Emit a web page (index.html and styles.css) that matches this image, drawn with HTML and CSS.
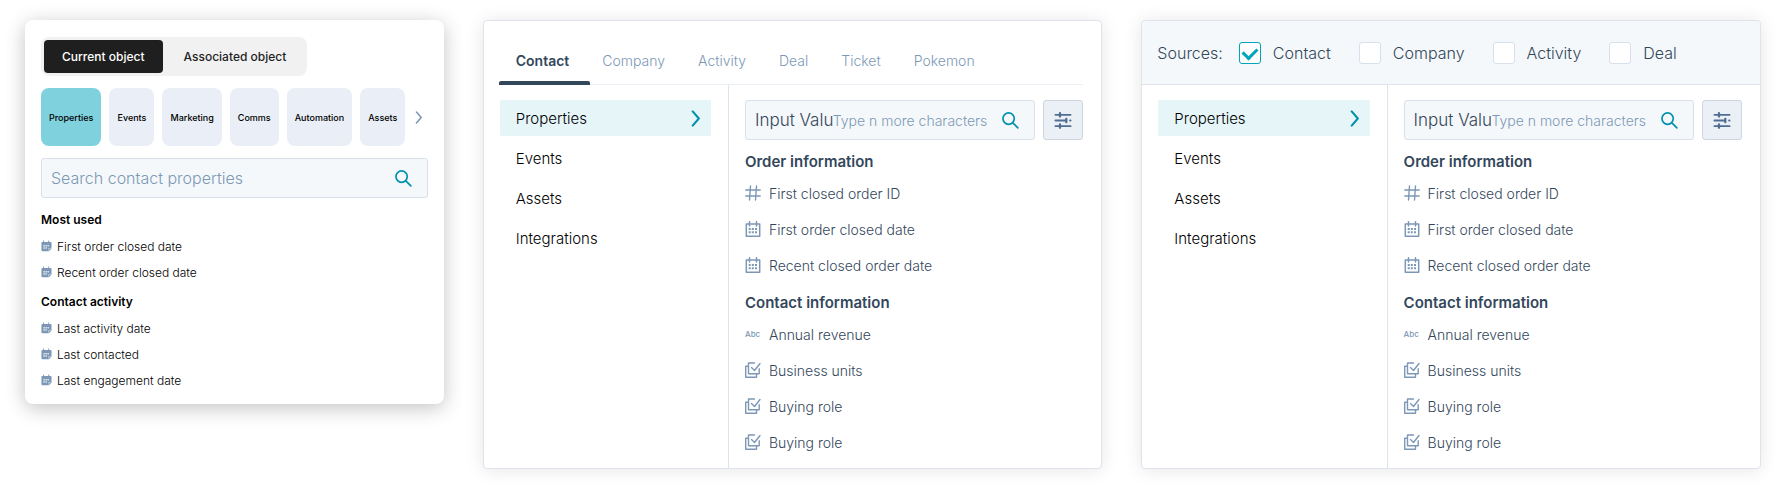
FILE: index.html
```html
<!DOCTYPE html>
<html lang="en">
<head>
  <meta charset="UTF-8" />
  <meta name="viewport" content="width=device-width, initial-scale=1.0"/>
  <title>Property picker</title>
  <link rel="stylesheet" href="styles.css">
</head>
<body>
  <svg class="sprite" aria-hidden="true">
    <symbol id="icon-search" viewBox="0 0 18 18">
      <circle cx="7" cy="7" r="6" fill="none" stroke="currentColor" stroke-width="1.8"/>
      <path d="M11.500 11.500l5.300 5.300" fill="none" stroke="currentColor" stroke-width="1.8" stroke-linecap="round"/>
    </symbol>
    <symbol id="icon-chevron" viewBox="0 0 10 18">
      <path d="M1.5 1.5l6.5 7.5l-6.5 7.5" fill="none" stroke="currentColor" stroke-width="2.2" stroke-linecap="round" stroke-linejoin="round"/>
    </symbol>
    <symbol id="icon-filter" viewBox="0 0 18 18">
      <path d="M1 3h5M6 3h11M1 9h11M16.500 9h0.500M1 15h5M6 15h11" fill="none" stroke="currentColor" stroke-width="2" stroke-linecap="round"/>
      <path d="M5.800 1.200v3.600M12.500 7.200v3.600M5.800 13.200v3.600" fill="none" stroke="currentColor" stroke-width="2.400" stroke-linecap="round"/>
    </symbol>
    <symbol id="icon-hash" viewBox="0 0 16 16">
      <path d="M5.500 1l-1 14M11.500 1l-1 14M0.800 5h14.400M0.800 11h14.400" fill="none" stroke="currentColor" stroke-width="1.400" stroke-linecap="round"/>
    </symbol>
    <symbol id="icon-calendar" viewBox="0 0 16 16">
      <path d="M1.300 3h13.400v12.200h-13.400zM4.500 0.700v4.300M11.500 0.700v4.300" fill="none" stroke="currentColor" stroke-width="1.500" stroke-linecap="round" stroke-linejoin="round"/>
      <path d="M6.800 7h2v2h-2zM10 7h2v2h-2zM3.700 10.300h2v2h-2zM6.800 10.300h2v2h-2zM10 10.300h2v2h-2zM3.700 7h2v2h-2z" fill="currentColor"/>
    </symbol>
    <symbol id="icon-calendar-solid" viewBox="0 0 12 12">
      <path d="M0.500 2.500q0-1 1-1h0.800v-1.500h1v1.500h4.600v-1.500h1v1.500h1.600q1 0 1 1v6.300l-2.800 2.900h-7.200q-1 0-1-1z" fill="currentColor"/>
      <path d="M2.800 5h1.200v1.500h-1.200zM5 5h1.200v1.500h-1.200zM7.200 5h1.200v1.500h-1.200zM2.800 7.400h1.200v1.500h-1.200zM5 7.400h1.200v1.500h-1.200z" fill="#fff"/>
      <path d="M10.800 8.600h-2.400v2.600" fill="none" stroke="#fff" stroke-width="0.500"/>
    </symbol>
    <symbol id="icon-multi" viewBox="0 0 16 16">
      <path d="M9.500 1h-6v10.700h10.700v-5M3 4.300h-2.300v10.900h10.800v-3M6.500 5.500l3 3l5.500-7" fill="none" stroke="currentColor" stroke-width="1.400" stroke-linecap="round" stroke-linejoin="round"/>
    </symbol>
  </svg>

  <main class="panels">
    <section class="card card-compact">
      <div class="toggle">
        <button type="button" class="toggle-btn active">Current object</button>
        <button type="button" class="toggle-btn">Associated object</button>
      </div>
      <div class="tiles">
        <button type="button" class="tile active">Properties</button>
        <button type="button" class="tile">Events</button>
        <button type="button" class="tile">Marketing</button>
        <button type="button" class="tile">Comms</button>
        <button type="button" class="tile">Automation</button>
        <button type="button" class="tile">Assets</button>
        <button type="button" class="tiles-next" aria-label="Next"><svg><use href="#icon-chevron"/></svg></button>
      </div>
      <div class="field">
        <input type="text" aria-label="Search contact properties" placeholder="Search contact properties">
        <svg class="icon-search"><use href="#icon-search"/></svg>
      </div>
      <h2>Most used</h2>
      <ul>
        <li><svg><use href="#icon-calendar-solid"/></svg>First order closed date</li>
        <li><svg><use href="#icon-calendar-solid"/></svg>Recent order closed date</li>
      </ul>
      <h2>Contact activity</h2>
      <ul>
        <li><svg><use href="#icon-calendar-solid"/></svg>Last activity date</li>
        <li><svg><use href="#icon-calendar-solid"/></svg>Last contacted</li>
        <li><svg><use href="#icon-calendar-solid"/></svg>Last engagement date</li>
      </ul>
    </section>

    <section class="card card-wide">
      <nav class="tabs">
        <a href="#" class="active">Contact</a>
        <a href="#">Company</a>
        <a href="#">Activity</a>
        <a href="#">Deal</a>
        <a href="#">Ticket</a>
        <a href="#">Pokemon</a>
      </nav>
      <div class="card-body">
        <nav class="side">
          <a href="#" class="active">Properties <svg><use href="#icon-chevron"/></svg></a>
          <a href="#">Events</a>
          <a href="#">Assets</a>
          <a href="#">Integrations</a>
        </nav>
        <div class="content">
          <div class="search-row">
            <div class="field">
              <input type="text" aria-label="Search" value="Input Value">
              <span class="hint">Type n more characters</span>
              <svg class="icon-search"><use href="#icon-search"/></svg>
            </div>
            <button type="button" class="filter-btn" aria-label="Filter"><svg><use href="#icon-filter"/></svg></button>
          </div>
          <h2>Order information</h2>
          <ul>
            <li><svg><use href="#icon-hash"/></svg>First closed order ID</li>
            <li><svg><use href="#icon-calendar"/></svg>First order closed date</li>
            <li><svg><use href="#icon-calendar"/></svg>Recent closed order date</li>
          </ul>
          <h2>Contact information</h2>
          <ul>
            <li><span class="abc">Abc</span>Annual revenue</li>
            <li><svg><use href="#icon-multi"/></svg>Business units</li>
            <li><svg><use href="#icon-multi"/></svg>Buying role</li>
            <li><svg><use href="#icon-multi"/></svg>Buying role</li>
          </ul>
        </div>
      </div>
    </section>

    <section class="card card-wide">
      <div class="sources">
        <span class="sources-title">Sources:</span>
        <label><input type="checkbox" checked> Contact</label>
        <label><input type="checkbox"> Company</label>
        <label><input type="checkbox"> Activity</label>
        <label><input type="checkbox"> Deal</label>
      </div>
      <div class="card-body">
        <nav class="side">
          <a href="#" class="active">Properties <svg><use href="#icon-chevron"/></svg></a>
          <a href="#">Events</a>
          <a href="#">Assets</a>
          <a href="#">Integrations</a>
        </nav>
        <div class="content">
          <div class="search-row">
            <div class="field">
              <input type="text" aria-label="Search" value="Input Value">
              <span class="hint">Type n more characters</span>
              <svg class="icon-search"><use href="#icon-search"/></svg>
            </div>
            <button type="button" class="filter-btn" aria-label="Filter"><svg><use href="#icon-filter"/></svg></button>
          </div>
          <h2>Order information</h2>
          <ul>
            <li><svg><use href="#icon-hash"/></svg>First closed order ID</li>
            <li><svg><use href="#icon-calendar"/></svg>First order closed date</li>
            <li><svg><use href="#icon-calendar"/></svg>Recent closed order date</li>
          </ul>
          <h2>Contact information</h2>
          <ul>
            <li><span class="abc">Abc</span>Annual revenue</li>
            <li><svg><use href="#icon-multi"/></svg>Business units</li>
            <li><svg><use href="#icon-multi"/></svg>Buying role</li>
            <li><svg><use href="#icon-multi"/></svg>Buying role</li>
          </ul>
        </div>
      </div>
    </section>
  </main>
</body>
</html>
```

FILE: styles.css
```css
* {
  box-sizing: border-box;
}
body {
  margin: 0;
  background: #fff;
  color: #33475b;
  font-family: Inter, "Open Sans", sans-serif;
  font-size: 14px;
  font-weight: 300;
}
button, input {
  font: inherit;
  color: inherit;
}
button {
  border: 0;
  padding: 0;
  cursor: pointer;
}
a {
  color: inherit;
  text-decoration: none;
}
ul {
  list-style: none;
  margin: 0;
  padding: 0;
}
h2 {
  margin: 0;
  font-size: 15px;
  font-weight: 600;
}
svg {
  flex: none;
}
.sprite {
  display: none;
}

.panels {
  display: grid;
  grid-template-columns: minmax(0, 419fr) minmax(0, 620fr) minmax(0, 620fr);
  gap: 39px;
  align-items: start;
  padding: 20px 20px 20px 25px;
}
.card {
  background: #fff;
}

/* search field */
.field {
  display: flex;
  align-items: center;
  flex: 1;
  min-width: 0;
  height: 40px;
  padding: 0 15px 0 9px;
  background: #f5f8fa;
  border: 1px solid #d7e0eb;
  border-radius: 3px;
}
.field input {
  flex: 1;
  min-width: 0;
  padding: 0;
  border: 0;
  outline: 0;
  background: none;
  font-size: 16px;
}
.content .field input {
  font-size: 17px;
}
.field input::placeholder {
  color: #7c98b6;
  opacity: 1;
}
.icon-search {
  width: 17px;
  height: 17px;
  color: #0091ae;
}
.hint {
  margin-right: 15px;
  color: #7c98b6;
  white-space: nowrap;
}

/* compact card */
.card-compact {
  padding: 17px 16px 11px;
  border-radius: 8px;
  box-shadow: 0 4px 20px rgba(0, 0, 0, 0.24);
  color: #000;
  font-size: 12px;
}
.toggle {
  display: inline-flex;
  gap: 3px;
  padding: 3px;
  background: #f1f1f1;
  border-radius: 8px;
}
.toggle-btn {
  height: 33px;
  padding: 0 18px;
  background: none;
  border-radius: 4px;
  color: #1f1f1f;
  font-weight: 500;
}
.toggle-btn.active {
  background: #1f1f1f;
  color: #fff;
}
.tiles {
  display: flex;
  gap: 8px;
  margin: 12px 0;
}
.tile {
  height: 58px;
  padding: 0 8px;
  background: #eaeff7;
  border-radius: 8px;
  font-size: 9px;
  font-weight: 500;
}
.tile.active {
  background: #7fd1de;
}
.tiles-next {
  margin-left: 2px;
  background: none;
  color: #7c98b6;
}
.tiles-next svg {
  display: block;
  width: 8px;
  height: 13px;
}
.card-compact h2 {
  padding-top: 4px;
  font-size: 12px;
  line-height: 26px;
}
.card-compact .field + h2 {
  padding-top: 9px;
}
.card-compact li {
  display: flex;
  align-items: center;
  gap: 5px;
  height: 26px;
}
.card-compact li svg {
  width: 11px;
  height: 12px;
  color: #7c98b6;
}

/* wide cards */
.card-wide {
  border: 1px solid #dfe3eb;
  border-radius: 4px;
  box-shadow: 0 1px 18px rgba(0, 0, 0, 0.1);
}
.tabs {
  display: flex;
  align-items: center;
  gap: 33px;
  height: 64px;
  margin: 0 18px 0 15px;
  padding: 18px 17px 0;
  border-bottom: 1px solid #eaf0f6;
  color: #7c98b6;
}
.tabs a {
  position: relative;
  padding-bottom: 2px;
}
.tabs .active {
  color: #33475b;
  font-weight: 600;
}
.tabs .active::after {
  content: "";
  position: absolute;
  left: -17px;
  right: -21px;
  bottom: -14px;
  height: 4px;
  background: #33475b;
  border-radius: 2px 2px 0 0;
}
.sources {
  display: flex;
  align-items: center;
  gap: 28px;
  height: 64px;
  padding: 0 15px;
  background: #f5f8fa;
  border-bottom: 1px solid #dfe3eb;
  border-radius: 4px 4px 0 0;
  font-size: 16px;
}
.sources-title {
  margin-right: -12px;
}
.sources label {
  display: flex;
  align-items: center;
  gap: 12px;
}
.sources input {
  appearance: none;
  display: grid;
  place-items: center;
  width: 22px;
  height: 22px;
  margin: 0;
  background: #fff;
  border: 1px solid #d7e0eb;
  border-radius: 3px;
}
.sources input:checked {
  border-color: #00a4bd;
}
.sources input:checked::before {
  content: "";
  width: 11px;
  height: 7px;
  border: solid #00a4bd;
  border-width: 0 0 3px 3px;
  transform: translateY(-1px) rotate(-45deg);
}
.card-body {
  display: grid;
  grid-template-columns: minmax(0, 245fr) minmax(0, 372fr);
}
.side {
  display: flex;
  flex-direction: column;
  gap: 4px;
  padding: 15px 17px 15px 16px;
  border-right: 1px solid #dfe3eb;
  color: #000;
  font-size: 15px;
}
.side a {
  display: flex;
  align-items: center;
  justify-content: space-between;
  height: 36px;
  padding: 0 10px 0 16px;
  border-radius: 2px;
}
.side .active {
  background: #e5f5f8;
}
.side svg {
  width: 10px;
  height: 17px;
  color: #0091ae;
}
.content {
  padding: 15px 18px 7px 16px;
}
.search-row {
  display: flex;
  gap: 8px;
  margin-bottom: 3px;
}
.filter-btn {
  display: grid;
  place-items: center;
  width: 40px;
  height: 40px;
  background: #eaf0f6;
  border: 1px solid #cbd6e2;
  border-radius: 3px;
  color: #506e91;
}
.filter-btn svg {
  width: 18px;
  height: 17px;
}
.content h2 {
  line-height: 37px;
}
.content li {
  display: flex;
  align-items: center;
  gap: 8px;
  height: 36px;
}
.content ul {
  margin: -5px 0 1px;
}
.content li svg {
  width: 16px;
  height: 16px;
  color: #7c98b6;
}
.abc {
  width: 16px;
  color: #7c98b6;
  font-size: 8px;
  font-weight: 500;
}
```
